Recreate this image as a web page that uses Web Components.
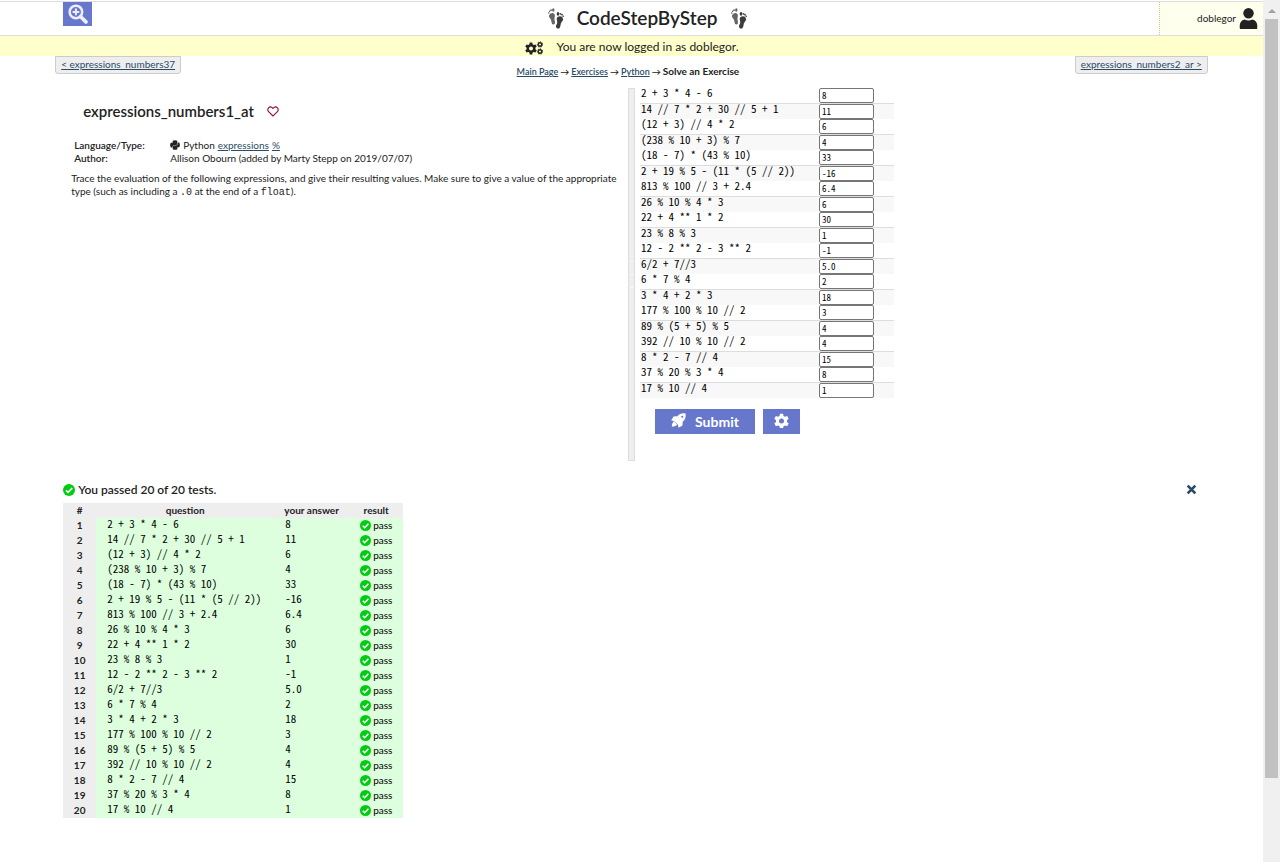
<!DOCTYPE html>
<html lang="en">
<head>
<meta charset="utf-8">
<title>CodeStepByStep - expressions_numbers1_at</title>
<style>
body {
  margin: 0;
  background: #fff;
  color: #222;
  font-family: Lato, "Liberation Sans", sans-serif;
  font-size: 10px;
  line-height: 13px;
  --mono: "Noto Sans Mono CJK SC", "Liberation Mono", monospace;
  --link: #2a4b66;
  --accent: #6677cc;
}
</style>
</head>
<body>
<step-page>
  <site-header user="doblegor"></site-header>
  <notice-bar>You are now logged in as doblegor.</notice-bar>
  <exercise-nav></exercise-nav>
  <split-view>
    <problem-panel slot="left"></problem-panel>
    <answer-form slot="right"></answer-form>
  </split-view>
  <test-results></test-results>
</step-page>

<script>
const EXERCISES = [
  ["2 + 3 * 4 - 6", "8"],
  ["14 // 7 * 2 + 30 // 5 + 1", "11"],
  ["(12 + 3) // 4 * 2", "6"],
  ["(238 % 10 + 3) % 7", "4"],
  ["(18 - 7) * (43 % 10)", "33"],
  ["2 + 19 % 5 - (11 * (5 // 2))", "-16"],
  ["813 % 100 // 3 + 2.4", "6.4"],
  ["26 % 10 % 4 * 3", "6"],
  ["22 + 4 ** 1 * 2", "30"],
  ["23 % 8 % 3", "1"],
  ["12 - 2 ** 2 - 3 ** 2", "-1"],
  ["6/2 + 7//3", "5.0"],
  ["6 * 7 % 4", "2"],
  ["3 * 4 + 2 * 3", "18"],
  ["177 % 100 % 10 // 2", "3"],
  ["89 % (5 + 5) % 5", "4"],
  ["392 // 10 % 10 // 2", "4"],
  ["8 * 2 - 7 // 4", "15"],
  ["37 % 20 % 3 * 4", "8"],
  ["17 % 10 // 4", "1"]
];

const GEAR = "M9.500 1h5l.7 3.600 2.400 1.400 3.400-1.200 2.500 4.300-2.700 2.400v2.800l2.700 2.400-2.500 4.300-3.400-1.200-2.400 1.400-.7 3.600h-5l-.7-3.600L6.400 19.800 3 21 .5 16.700l2.700-2.400v-2.800L.5 9.100 3 4.800 6.400 6l2.400-1.400zM12 8.800a4 4 0 1 0 0 8 4 4 0 0 0 0-8z";
const ICONS = {
  zoom: ["0 0 24 24", '<circle cx="9.500" cy="9.500" r="7.500" fill="none" stroke="currentColor" stroke-width="3"/><path d="M9.500 5.500v8M5.500 9.500h8" stroke="currentColor" stroke-width="2.400"/><path d="M15 15l6.500 6.500" stroke="currentColor" stroke-width="4.500" stroke-linecap="round"/>'],
  feet: ["0 0 16 21", '<g fill="#666"><path d="M1 7.500Q2 4.500 5 5q2.500 1 1.700 4-.9 2 .3 5 .3 2.500-1.700 2.500-1.800-.3-1.900-3Q3.200 11 1.800 10 .8 9 1 7.500z"/><circle cx=".8" cy="5" r=".8"/><circle cx="1.600" cy="3.300" r=".8"/><circle cx="3" cy="2.200" r=".9"/><ellipse cx="5.300" cy="2" rx="1.200" ry="1.700"/></g><g fill="#3c3c3c"><path d="M9.500 9Q12.500 7.300 14.600 9.500q1.200 2-.6 4-1.500 1.500-1.600 4.500-.4 3-2.900 2.600-2.200-.8-1.200-3.600 1.500-2.600.7-4.500Q8 10 9.500 9z"/><ellipse cx="10" cy="5.800" rx="1.300" ry="1.900"/><circle cx="12.400" cy="5.800" r=".9"/><circle cx="14" cy="6.700" r=".9"/><circle cx="15.200" cy="8.200" r=".8"/></g>'],
  user: ["0 0 20 22", '<circle cx="10" cy="5.500" r="5.500" fill="currentColor"/><path d="M1 22q-1.500-8.500 5-10 4 2 8 0 6.500 1.500 5 10z" fill="currentColor"/>'],
  gear: ["0 0 24 24", `<path d="${GEAR}" fill="currentColor" fill-rule="evenodd"/>`],
  gears: ["0 0 36 28", `<path d="${GEAR}" transform="translate(0 2)" fill="currentColor" fill-rule="evenodd"/><g fill="none" stroke="currentColor"><circle cx="30" cy="7" r="3.500" stroke-width="3"/><circle cx="30" cy="21" r="3.500" stroke-width="3"/><g stroke-width="2" stroke-dasharray="2 3"><circle cx="30" cy="7" r="5.500"/><circle cx="30" cy="21" r="5.500"/></g></g>`],
  heart: ["0 0 12 11", '<path d="M6 10L1.600 5.700C-.6 3 2.500-.6 5.200 1.600L6 2.400l.8-.8C9.500-.6 12.600 3 10.400 5.700z" fill="none" stroke="#a01030" stroke-width="1.100"/>'],
  python: ["0 0 12 12", '<path d="M3.200 1Q6-.5 8.700 1V5.200L7.600 6.200H4.200L3 7.400V8.900H1Q-.7 5.800 1 3.200h2.200z" fill="currentColor"/><path d="M8.800 11Q6 12.500 3.300 11V7.600l.9-1h3.400L9.200 5.400V3.100H11q1.700 2.900 0 5.600H8.800z" fill="currentColor"/>'],
  rocket: ["0 0 18 18", '<path d="M17.500.5Q11-.5 7.500 4L3 4.200.2 9l3.600.6 4.600 4.600.6 3.600 4.800-2.800.2-4.500Q18.500 7 17.500.5z" fill="currentColor"/><path d="M3.500 9.500Q1 12 1 16.500q4-.2 6.500-2.500z" fill="currentColor"/><circle cx="13.500" cy="4.500" r="1.300" fill="#67c"/>'],
  check: ["0 0 12 12", '<circle cx="6" cy="6" r="6" fill="#0c1"/><path d="M3 6.300l2.100 2.100L9.200 4.100" fill="none" stroke="#fff" stroke-width="1.700"/>'],
  close: ["0 0 10 10", '<path d="M1.500 1.500l7 7M8.500 1.500l-7 7" stroke="currentColor" stroke-width="2.400"/>']
};

function define(name, render) {
  customElements.define(name, class extends HTMLElement {
    connectedCallback() {
      if (this.shadowRoot) return;
      const template = document.createElement("template");
      template.innerHTML = render(this);
      this.attachShadow({ mode: "open" }).append(template.content.cloneNode(true));
    }
  });
}

define("ui-icon", el => {
  const [box, art] = ICONS[el.getAttribute("name")];
  return `<style>
    :host { display: inline-block; flex: none; width: 12px; height: 12px; }
    svg { display: block; width: 100%; height: 100%; }
  </style><svg viewBox="${box}" aria-hidden="true">${art}</svg>`;
});

define("page-scrollbar", () => `<style>
  :host { display: flex; flex-direction: column; align-items: center; box-sizing: border-box;
    height: 100vh; background: #f0f0f0; position: sticky; top: 0; padding-top: 9px; }
  .up { border: 4px solid transparent; border-top: 0; border-bottom-color: #a0a0a0; }
  .thumb { width: 13px; height: 89%; margin-top: 6px; background: #c1c1c1; }
</style><span class="up"></span><span class="thumb"></span>`);

define("step-page", () => `<style>
  :host { display: grid; grid-template-columns: minmax(0, 1fr) 17px; min-height: 100vh; }
  .content { border-top: 1px solid #ddd; margin-top: 1px; }
</style><div class="content"><slot></slot></div><page-scrollbar></page-scrollbar>`);

define("site-header", el => `<style>
  :host { display: grid; grid-template-columns: 1fr auto 1fr; height: 33px; padding-left: 5%;
    border-bottom: 1px solid #ddd; }
  .zoom { justify-self: start; align-self: start; display: grid; place-items: center; width: 29px; height: 24px;
    padding: 0; border: 0; background: var(--accent); color: #eef; }
  .zoom ui-icon { width: 20px; height: 20px; }
  .brand { display: flex; align-items: flex-start; gap: 13px; margin-right: 32px; }
  .brand ui-icon { width: 16px; height: 21px; margin-top: 6px; }
  h1 { margin: 0; font-size: 19px; line-height: 32px; font-weight: 600; }
  .user { justify-self: end; display: flex; align-items: center; justify-content: flex-end; gap: 3px;
    box-sizing: border-box; width: 104px; padding-right: 5px; background: #ffffee; border-left: 1px dotted #cccc88; }
  .user ui-icon { width: 19px; height: 21px; }
</style>
<button class="zoom" type="button" aria-label="Zoom in"><ui-icon name="zoom"></ui-icon></button>
<div class="brand"><ui-icon name="feet"></ui-icon><h1>CodeStepByStep</h1><ui-icon name="feet"></ui-icon></div>
<div class="user"><span>${el.getAttribute("user")}</span><ui-icon name="user"></ui-icon></div>`);

define("notice-bar", () => `<style>
  :host { display: flex; align-items: center; justify-content: center; gap: 14px; height: 20px;
    background: #ffffcc; font-size: 12px; line-height: 20px; }
  span { padding-top: 2px; }
  ui-icon { width: 18px; height: 14px; margin-top: 4px; }
</style><ui-icon name="gears"></ui-icon><span><slot></slot></span>`);

define("exercise-nav", () => `<style>
  :host { display: flex; justify-content: space-between; align-items: flex-start; width: 90%; margin: 0 auto; height: 32px; }
  a { color: var(--link); }
  .step { box-sizing: border-box; height: 18px; padding: 0 5px; border: 1px solid #ccc; border-radius: 0 0 3px 3px;
    background: #eee; font-size: 10px; line-height: 14px; white-space: nowrap; }
  .prev { margin-left: -8px; }
  .next { margin-right: -8px; }
  .trail { display: flex; gap: 2px; font-size: 9px; line-height: 16px; font-weight: 600; margin-top: 8px; }
  .trail b { font-size: 10px; line-height: 14px; font-weight: 700; }
</style>
<a class="step prev" href="#">&lt; expressions_numbers37</a>
<nav class="trail"><a href="#">Main Page</a><span>→</span><a href="#">Exercises</a><span>→</span><a href="#">Python</a><span>→</span><b>Solve an Exercise</b></nav>
<a class="step next" href="#">expressions_numbers2_ar &gt;</a>`);

define("split-view", () => `<style>
  :host { display: grid; grid-template-columns: minmax(0, 565fr) 7px minmax(0, 565fr); width: 90%; margin: 0 auto; min-height: 373px; }
  .grip { box-sizing: border-box; border: 1px solid #ddd; background: #eee; display: flex; flex-direction: column;
    align-items: center; justify-content: center; gap: 12px; }
  .grip i { width: 2px; height: 1px; background: #fff; }
</style>
<slot name="left"></slot><div class="grip"><i></i><i></i><i></i></div><slot name="right"></slot>`);

define("problem-panel", () => `<style>
  :host { display: block; padding: 13px 8px 0; }
  .title { display: flex; align-items: center; gap: 13px; margin: 0 0 18px 12px; }
  h2 { margin: 0; font-size: 15px; line-height: 20px; font-weight: 600; }
  .fav { display: grid; padding: 0; border: 0; background: none; }
  .fav ui-icon { height: 11px; }
  dl { display: grid; grid-template-columns: 96px 1fr; margin: 0 0 7px 3px; font-size: 10px; }
  dt { font-weight: 600; }
  dd { margin: 0; display: flex; align-items: center; gap: 3px; }
  dd ui-icon { width: 10px; height: 10px; margin-bottom: 2px; }
  a { color: var(--link); }
  p { margin: 0; font-size: 10px; }
  code { font-family: "Liberation Mono", monospace; font-size: 10px; line-height: 1; }
</style>
<div class="title"><h2>expressions_numbers1_at</h2>
<button class="fav" type="button" aria-label="Add to favorites"><ui-icon name="heart"></ui-icon></button></div>
<dl>
  <dt>Language/Type:</dt><dd><ui-icon name="python"></ui-icon><span>Python</span> <a href="#">expressions</a> <a href="#">%</a></dd>
  <dt>Author:</dt><dd>Allison Obourn (added by Marty Stepp on 2019/07/07)</dd>
</dl>
<p>Trace the evaluation of the following expressions, and give their resulting values. Make sure to give a value of the appropriate type (such as including a <code>.0</code> at the end of a <code>float</code>).</p>`);

define("answer-form", () => `<style>
  :host { display: block; padding-left: 5px; }
  table { border-collapse: separate; border-spacing: 0; width: 254px; table-layout: fixed; color: #000; }
  td { padding: 0; vertical-align: top; height: 15px; }
  td:first-child { width: 179px; }
  tr:nth-child(even) td { border-top: 1px solid #ddd; background: #f8f8f8; }
  label { display: block; padding-left: 1px; font-family: var(--mono); font-size: 11px; line-height: 9px; white-space: pre; }
  input { display: block; box-sizing: border-box; width: 55px; height: 15px; margin: 0; padding: 0 2px;
    border: 1px solid #767676; border-radius: 2px; background: #fff; color: #000; font-family: var(--mono); font-size: 9px; line-height: 13px; }
  .actions { display: flex; gap: 8px; padding: 11px 0 0 15px; }
  button { display: flex; align-items: center; justify-content: center; gap: 9px; height: 25px; padding: 0;
    border: 0; background: var(--accent); color: #fff; font: 700 14px/25px Lato, sans-serif; }
  .submit { width: 100px; }
  .options { width: 37px; }
  ui-icon { width: 15px; height: 15px; margin-bottom: 3px; }
</style>
<form onsubmit="return false">
<table>${EXERCISES.map(([q, a], i) => `<tr><td><label for="a${i}">${q}</label></td><td><input id="a${i}" value="${a}"></td></tr>`).join("")}</table>
<div class="actions"><button class="submit" type="submit"><ui-icon name="rocket"></ui-icon>Submit</button>
<button class="options" type="button" aria-label="Options"><ui-icon name="gear"></ui-icon></button></div>
</form>`);

define("test-results", () => `<style>
  :host { display: block; width: 90%; margin: 21px auto 0; padding-bottom: 44px; }
  header { display: flex; align-items: center; gap: 3px; height: 16px; margin-bottom: 5px; }
  h3 { margin: 0; font-size: 12px; line-height: 16px; font-weight: 600; flex: 1; }
  .close { display: grid; padding: 0 0 2px; border: 0; margin-right: 3px; background: none; color: var(--link); }
  .close ui-icon { width: 11px; height: 11px; }
  table { border-collapse: separate; border-spacing: 0; table-layout: fixed; width: 340px; color: #000; }
  th, td { height: 15px; padding: 0; line-height: 15px; font-size: 10px; }
  th { background: #eee; font-weight: 700; color: #222; }
  td { background: #ddffdd; }
  td.code { vertical-align: top; padding-left: 11px; font-family: var(--mono); font-size: 11px; line-height: 11px; white-space: pre; }
  .n { width: 33px; } .q { width: 178px; } .a { width: 75px; }
  .pass { display: flex; align-items: center; gap: 2px; height: 15px; padding-left: 11px; }
  .pass ui-icon { width: 11px; height: 11px; }
</style>
<header><ui-icon name="check"></ui-icon><h3>You passed 20 of 20 tests.</h3>
<button class="close" type="button" aria-label="Close"><ui-icon name="close"></ui-icon></button></header>
<table><thead><tr><th class="n">#</th><th class="q">question</th><th class="a">your answer</th><th>result</th></tr></thead>
<tbody>${EXERCISES.map(([q, a], i) => `<tr><th>${i + 1}</th><td class="code">${q}</td><td class="code">${a}</td><td><div class="pass"><ui-icon name="check"></ui-icon><span>pass</span></div></td></tr>`).join("")}</tbody></table>`);
</script>
</body>
</html>
